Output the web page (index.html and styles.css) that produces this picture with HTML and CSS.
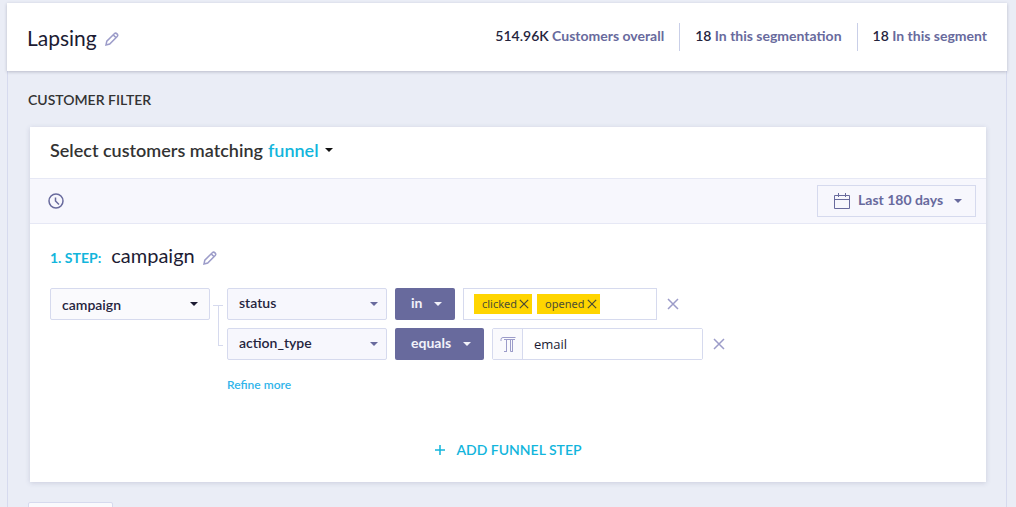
FILE: index.html
```html
<!DOCTYPE html>
<html lang="en">
<head>
    <meta charset="utf-8">
    <title>Lapsing</title>
    <link rel="stylesheet" href="styles.css">
</head>
<body>
    <svg class="sprite" width="0" height="0">
        <symbol id="pencil" viewBox="0 0 14 14">
            <path d="M1 13 L1.8 9.2 L9.3 1.7 Q10.6 .5 12 1.9 Q13.4 3.3 12.2 4.6 L4.7 12.1 Z M8.2 2.9 L11.1 5.8" />
        </symbol>
        <symbol id="cross" viewBox="0 0 12 12">
            <path d="M1 1 L11 11 M11 1 L1 11" />
        </symbol>
    </svg>

    <div class="shell">
        <header class="header">
            <h1 class="title">Lapsing</h1>
            <button class="icon-btn"><svg class="pencil"><use href="#pencil" /></svg></button>
            <ul class="stats">
                <li><b>514.96K</b> Customers overall</li>
                <li><b>18</b> In this segmentation</li>
                <li><b>18</b> In this segment</li>
            </ul>
        </header>

        <main class="content">
            <h2 class="section-title">CUSTOMER FILTER</h2>

            <section class="card">
                <div class="card-head">
                    <label for="matching">Select customers matching</label>
                    <span class="select select-plain">
                        <select id="matching"><option>funnel</option></select>
                    </span>
                </div>

                <div class="time-bar">
                    <svg class="clock" viewBox="0 0 16 16">
                        <circle cx="8" cy="8" r="7" />
                        <path d="M7.5 4.5 V8 L11 11.5" />
                    </svg>
                    <label class="date-range">
                        <svg class="calendar" viewBox="0 0 18 18">
                            <path d="M1.5 3.5 H16.5 V16.5 H1.5 Z M1.5 7.5 H16.5 M5.5 1 V5 M12.5 1 V5" />
                        </svg>
                        <span class="select select-date">
                            <select><option>Last 180 days</option></select>
                        </span>
                    </label>
                </div>

                <div class="step">
                    <div class="step-head">
                        <span class="step-number">1. STEP:</span>
                        <h3 class="step-name">campaign</h3>
                        <button class="icon-btn"><svg class="pencil"><use href="#pencil" /></svg></button>
                    </div>

                    <div class="step-body">
                        <span class="select select-event">
                            <select><option>campaign</option></select>
                        </span>
                        <div class="branch"></div>
                        <div class="conditions">
                            <div class="condition">
                                <span class="select select-field">
                                    <select><option>status</option></select>
                                </span>
                                <span class="select select-op">
                                    <select><option>in</option></select>
                                </span>
                                <div class="tags">
                                    <span class="tag">clicked<button class="icon-btn"><svg class="tag-cross"><use href="#cross" /></svg></button></span>
                                    <span class="tag">opened<button class="icon-btn"><svg class="tag-cross"><use href="#cross" /></svg></button></span>
                                </div>
                                <button class="icon-btn"><svg class="cross"><use href="#cross" /></svg></button>
                            </div>
                            <div class="condition">
                                <span class="select select-field">
                                    <select><option>action_type</option></select>
                                </span>
                                <span class="select select-op">
                                    <select><option>equals</option></select>
                                </span>
                                <label class="text-field">
                                    <span class="text-type">
                                        <svg viewBox="0 0 16 16">
                                            <path d="M1 5 V3.5 Q1 1.5 3 1.5 H15.5 M4 3.5 H15 M6.5 3.5 V15 M4 15.5 H7 M10.5 3.5 V15.5 H13 M12.5 3.5 V15" />
                                        </svg>
                                    </span>
                                    <input type="text" value="email">
                                </label>
                                <button class="icon-btn"><svg class="cross"><use href="#cross" /></svg></button>
                            </div>
                            <a class="refine" href="#">Refine more</a>
                        </div>
                    </div>
                </div>

                <button class="add-step">
                    <svg viewBox="0 0 12 12"><path d="M6 1 V11 M1 6 H11" /></svg>
                    ADD FUNNEL STEP
                </button>
            </section>

            <button class="footer-btn"></button>
        </main>
    </div>
</body>
</html>
```
FILE: styles.css
```css
* {
    box-sizing: border-box;
}
body {
    margin: 0;
    background: #eaedf6;
    color: #1c1b33;
    font-family: Lato, sans-serif;
    font-size: 14px;
    line-height: 20px;
}
h1, h2, h3, ul {
    margin: 0;
    padding: 0;
}
svg {
    display: block;
    fill: none;
    stroke: currentColor;
}
button, select, input {
    font: inherit;
    color: inherit;
}
.sprite {
    position: absolute;
}
.shell {
    margin: 3px 9px 0 7px;
}

/* header */
.header {
    display: flex;
    align-items: center;
    height: 68px;
    padding: 0 20px;
    background: #fff;
    box-shadow: 0 1px 3px rgba(40, 45, 70, 0.25);
    position: relative;
}
.title {
    font-size: 21px;
    font-weight: 400;
    line-height: 28px;
    padding-top: 2px;
}
.icon-btn {
    padding: 0;
    border: none;
    background: none;
    color: #9c9cc9;
    cursor: pointer;
}
.pencil {
    width: 14px;
    height: 14px;
    margin: 3px 0 0 8px;
    stroke-width: 1.5;
}
.stats {
    display: flex;
    margin-left: auto;
    list-style: none;
    color: #686a9d;
    font-weight: 700;
}
.stats li {
    padding: 3px 15px 5px;
    border-left: 1px solid #c9cfe8;
}
.stats li:first-child {
    border-left: none;
}
.stats li:last-child {
    padding-right: 0;
}
.stats b {
    font-weight: 600;
    color: #25243d;
}

.content {
    min-height: calc(100vh - 71px);
    padding: 18px 20px 0;
    border: 1px solid #d6daee;
    border-width: 0 1px;
}
.section-title {
    font-size: 14px;
    font-weight: 600;
    line-height: 22px;
    color: #333;
}
.card {
    margin: 16px 0 20px 2px;
    background: #fff;
    box-shadow: 0 1px 5px rgba(60, 65, 110, 0.18);
}
.card-head {
    display: flex;
    align-items: center;
    gap: 5px;
    height: 51px;
    padding: 0 20px 5px;
    font-size: 18px;
    font-weight: 600;
    color: #333;
}

/* drop-downs */
.select {
    position: relative;
    display: inline-flex;
    color: #25243d;
}
.select::after {
    content: "";
    position: absolute;
    right: 13px;
    top: 50%;
    margin-top: -2px;
    border: 4px solid transparent;
    border-top-color: #686a9d;
    border-bottom: none;
    pointer-events: none;
}
.select select {
    appearance: none;
    width: 100%;
    height: 32px;
    margin: 0;
    padding: 0 24px 0 11px;
    border: 1px solid #d6daee;
    border-radius: 2px;
    background: #f7f7fd;
    font-weight: 600;
}
.select-plain {
    color: #12b5dc;
}
.select-plain select {
    border: none;
    padding: 0 14px 0 0;
    background: none;
}
.select-plain::after {
    right: 0;
    border-top-color: #111;
}
.time-bar {
    display: flex;
    align-items: center;
    justify-content: space-between;
    height: 46px;
    padding: 0 10px 0 18px;
    border: 1px solid #e6e8f5;
    border-width: 1px 0;
    background: #f7f7fd;
    color: #686a9d;
}
.clock {
    width: 16px;
    height: 16px;
    stroke-width: 1.5;
}
.date-range {
    display: flex;
    align-items: center;
    height: 32px;
    padding-left: 15px;
    border: 1px solid #d6daee;
}
.calendar {
    width: 18px;
    height: 18px;
}
.select-date {
    color: #686a9d;
}
.select-date select {
    border: none;
    height: 30px;
    padding: 0 31px 2px 7px;
    background: none;
    font-weight: 700;
}

/* funnel step */
.step {
    padding: 18px 20px 0;
}
.step-head {
    display: flex;
    align-items: center;
    height: 28px;
}
.step-number {
    padding-top: 4px;
    font-weight: 700;
    color: #12b5dc;
}
.step-name {
    padding-bottom: 2px;
    margin-left: 10px;
    font-size: 20px;
    font-weight: 400;
}
.step-body {
    display: flex;
    margin-top: 18px;
}
.select-event {
    width: 160px;
    height: 32px;
}
.select-event select {
    padding-top: 2px;
    background: #fafafd;
}
.select-event::after {
    right: 12px;
    border-top-color: #1c1b33;
}
.branch {
    width: 5px;
    height: 41px;
    margin: 17px 4px 0 8px;
    border: 1px solid #d6daee;
    border-width: 0 0 1px 1px;
    position: relative;
}
.branch::before {
    content: "";
    position: absolute;
    top: 0;
    left: -6px;
    right: 0;
    border-top: 1px solid #d6daee;
}
.conditions {
    display: flex;
    flex-direction: column;
    gap: 8px;
}
.condition {
    display: flex;
    align-items: center;
    gap: 8px;
}
.condition > .icon-btn {
    margin-left: 2px;
}
.select-field {
    width: 160px;
}
.select-field::after {
    right: 9px;
}
.select-field select, .select-op select {
    padding-bottom: 2px;
}
.select-op {
    color: #f2f2fa;
}
.select-op::after {
    border-top-color: #f2f2fa;
}
.select-op select {
    padding-left: 16px;
    padding-right: 32px;
    border: none;
    background: #686a9d;
    font-weight: 700;
}
.tags {
    display: flex;
    align-items: center;
    gap: 5px;
    width: 194px;
    height: 32px;
    padding: 0 10px;
    border: 1px solid #d6daee;
}
.tag {
    display: flex;
    align-items: center;
    gap: 2px;
    height: 20px;
    padding: 0 3px 0 8px;
    background: #ffd500;
    color: #4d4d33;
    font-family: "Noto Sans", sans-serif;
    font-size: 11px;
}
.tag .icon-btn {
    color: #4d4d33;
}
.tag-cross {
    width: 10px;
    height: 10px;
    stroke-width: 1.5;
}
.cross {
    width: 12px;
    height: 12px;
    stroke-width: 1.5;
}
.text-field {
    display: flex;
    width: 211px;
    height: 32px;
    border: 1px solid #d6daee;
    border-radius: 2px;
}
.text-type {
    display: flex;
    align-items: center;
    justify-content: center;
    width: 30px;
    border-right: 1px solid #d6daee;
    background: #fafafd;
    color: #9c9cc9;
}
.text-type svg {
    width: 16px;
    height: 16px;
}
.text-field input {
    flex: 1;
    min-width: 0;
    padding: 0 11px;
    border: none;
    font-family: "Open Sans", sans-serif;
    font-size: 13px;
}
.refine {
    margin-top: 7px;
    font-size: 12px;
    font-weight: 600;
    color: #31b5ea;
    text-decoration: none;
}
.add-step {
    display: flex;
    align-items: center;
    gap: 10px;
    margin: 35px auto 0;
    padding: 10px 0 22px;
    border: none;
    background: none;
    color: #12b5dc;
    font-weight: 600;
}
.add-step svg {
    width: 12px;
    height: 12px;
    stroke-width: 1.5;
}
.footer-btn {
    display: block;
    width: 85px;
    height: 32px;
    border: 1px solid #d6daee;
    border-radius: 2px;
    background: #fafafd;
}
```
